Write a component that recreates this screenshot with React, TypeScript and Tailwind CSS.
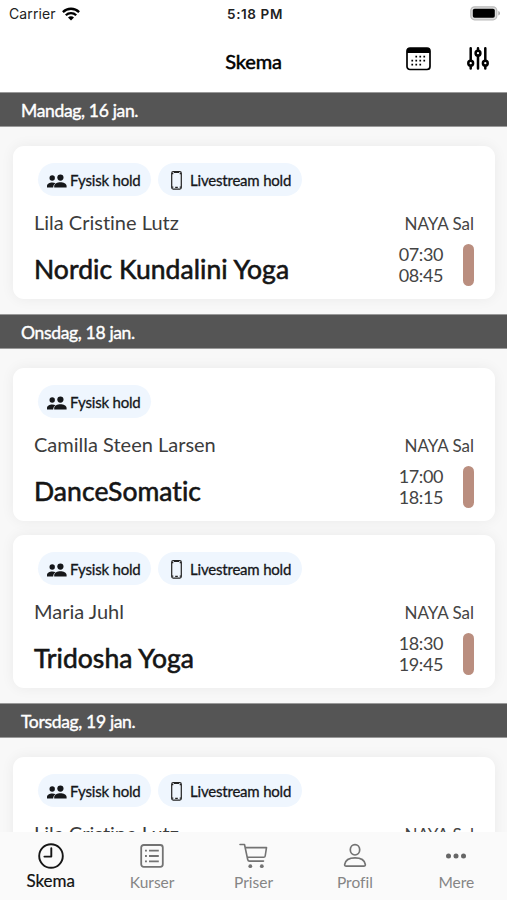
import type { ReactNode } from 'react'

interface Lesson {
  teacher: string
  title: string
  start: string
  end: string
  livestream?: boolean
}

interface Day {
  label: string
  lessons: Lesson[]
}

const days: Day[] = [
  {
    label: 'Mandag, 16 jan.',
    lessons: [
      { teacher: 'Lila Cristine Lutz', title: 'Nordic Kundalini Yoga', start: '07:30', end: '08:45', livestream: true }
    ]
  },
  {
    label: 'Onsdag, 18 jan.',
    lessons: [
      { teacher: 'Camilla Steen Larsen', title: 'DanceSomatic', start: '17:00', end: '18:15' },
      { teacher: 'Maria Juhl', title: 'Tridosha Yoga', start: '18:30', end: '19:45', livestream: true }
    ]
  },
  {
    label: 'Torsdag, 19 jan.',
    lessons: [
      { teacher: 'Lila Cristine Lutz', title: 'Nordic Kundalini Yoga', start: '07:30', end: '08:45', livestream: true }
    ]
  }
]

const WifiIcon = () => (
  <svg width="18" height="14" viewBox="0 0 18 14" fill="none" stroke="#000" strokeWidth="2.3">
    <path d="M.9 5.1a11.5 11.5 0 0 1 16.2 0" />
    <path d="M3.8 8.2a7.4 7.4 0 0 1 10.4 0" />
    <path d="M9 13.4 6 10.4a4.2 4.2 0 0 1 6 0Z" fill="#000" stroke="none" />
  </svg>
)

const BatteryIcon = () => (
  <svg width="31" height="15" viewBox="0 0 31 15">
    <rect x=".8" y=".8" width="26" height="13" rx="3.8" fill="#ddd" stroke="#bbb" strokeWidth="1.2" />
    <rect x="2.8" y="2.8" width="22" height="9" rx="1.8" fill="#000" />
    <path d="M28.3 5v4.6q1.7-.6 1.7-2.3T28.3 5Z" fill="#aaa" />
  </svg>
)

const CalendarIcon = () => (
  <svg width="25" height="24" viewBox="0 0 25 24">
    <rect x="1" y="1" width="23" height="21.5" rx="3" fill="none" stroke="#000" strokeWidth="1.7" />
    <path d="M1 6V4a3 3 0 0 1 3-3h17a3 3 0 0 1 3 3v2Z" fill="#000" />
    <path
      d="M9.4 9.7h10M5.4 13.7h14M5.4 17.7h10"
      stroke="#000"
      strokeWidth="1.7"
      strokeDasharray="1.7 2.3"
    />
  </svg>
)

const FilterIcon = () => (
  <svg width="22" height="23" viewBox="0 0 22 23" fill="none" stroke="#000" strokeWidth="2.5" strokeLinecap="round">
    <path d="M3.7 1.3v11.6M3.7 19.2v2.3M11 1.3v1.9M11 9.3v12.2M18.3 1.3v11.6M18.3 19.2v2.3" />
    <circle cx="3.7" cy="16.2" r="2.4" />
    <circle cx="11" cy="6.2" r="2.4" />
    <circle cx="18.3" cy="16.2" r="2.4" />
  </svg>
)

const PeopleIcon = () => (
  <svg width="20" height="14" viewBox="0 0 20 14" fill="#15171a">
    <circle cx="5.2" cy="4" r="2.7" />
    <circle cx="13.4" cy="3.6" r="3.1" />
    <path d="M0 13.500V12C0 9.600 2.600 8.400 5.200 8.400c1.300 0 2.500.3 3.400.8C7 10.200 6.200 11.600 6.200 13.500Z" />
    <path d="M7.200 13.500v-1.400c0-2.500 3.200-3.900 6.200-3.900s6.200 1.400 6.200 3.900v1.400Z" />
  </svg>
)

const PhoneIcon = () => (
  <svg width="11" height="19" viewBox="0 0 11 19" fill="none" stroke="#222" strokeWidth="1.2">
    <rect x=".7" y=".7" width="9.600" height="17.400" rx="1.500" />
    <path d="M3 1.400h5M1 2.600h1.300M8.700 2.600H10M1 16.200h1.300M8.700 16.200H10M4.200 16.400h2.600" />
  </svg>
)

const ClockIcon = () => (
  <svg width="26" height="26" viewBox="0 0 26 26" fill="none" stroke="#161616" strokeWidth="1.900">
    <circle cx="13" cy="13" r="11.800" />
    <path d="M13.300 5.300v8.300H6.400" strokeLinecap="round" strokeLinejoin="round" />
  </svg>
)

const ListIcon = () => (
  <svg width="24" height="24" viewBox="0 0 24 24" fill="none" stroke="#737373" strokeWidth="1.800">
    <rect x="1.200" y="1" width="21.600" height="21.800" rx="2.500" />
    <path d="M9 6.700h9.800M9 12h9.800M9 17.300h9.800" />
    <path d="M5 6.700h1.900M5 12h1.900M5 17.300h1.900" />
  </svg>
)

const CartIcon = () => (
  <svg width="29" height="26" viewBox="0 0 29 26" fill="none" stroke="#737373" strokeWidth="1.600" strokeLinejoin="round">
    <path d="M1 1.500h4.500L8.700 16.500q.3 1.600 1.800 1.600h14" strokeLinecap="round" />
    <path d="M6.200 4.600h21.300l-1.300 8.400q-.2 1.300-1.500 1.300H8.300" />
    <circle cx="11.300" cy="23.200" r="1.900" fill="#737373" stroke="none" />
    <circle cx="22.800" cy="23.200" r="1.900" fill="#737373" stroke="none" />
  </svg>
)

const ProfileIcon = () => (
  <svg width="24" height="25" viewBox="0 0 24 25" fill="none" stroke="#737373" strokeWidth="1.700">
    <ellipse cx="12" cy="6.800" rx="4.700" ry="5.200" />
    <path d="M3.300 23.200h17.400c1.200 0 1.800-.7 1.600-1.800-.7-4.400-5.200-6.600-10.300-6.600S2.400 17 1.700 21.400c-.2 1.100.4 1.800 1.600 1.800Z" />
  </svg>
)

const MoreIcon = () => (
  <svg width="22" height="6" viewBox="0 0 22 6" fill="#666">
    <circle cx="3.500" cy="3" r="2.500" />
    <circle cx="11" cy="3" r="2.500" />
    <circle cx="18.500" cy="3" r="2.500" />
  </svg>
)

const StatusBar = () => (
  <div className="grid h-7 grid-cols-[1fr_auto_1fr] items-center pr-[6px] pl-[9px] font-[Inter,sans-serif] text-[14px] text-[#222]">
    <div className="flex items-center gap-[6px] pb-px">
      <span className="tracking-[0.1px]">Carrier</span>
      <WifiIcon />
    </div>
    <span className="text-center text-[13.5px] font-semibold tracking-[0.6px]">5:18 PM</span>
    <div className="flex justify-end pb-[2px]">
      <BatteryIcon />
    </div>
  </div>
)

const LessonCard = ({ lesson }: { lesson: Lesson }) => (
  <article className="h-[153px] rounded-[11px] bg-white px-[21px] pt-[17px] shadow-[0_0_14px_rgba(0,0,0,0.06)]">
    {/* Attendance types */}
    <div className="ml-1 flex h-[33px] gap-[7px] text-[15px] tracking-[-0.2px] text-[#15171a] [-webkit-text-stroke:0.3px]">
      <span className="flex w-[113px] items-center gap-[3px] rounded-full bg-[#eff6fe] pt-[2px] pl-[9px]">
        <PeopleIcon />
        <span className="whitespace-nowrap">Fysisk hold</span>
      </span>
      {lesson.livestream && (
        <span className="flex w-[144px] items-center gap-2 rounded-full bg-[#eff6fe] pt-[2px] pl-[13px]">
          <PhoneIcon />
          <span className="whitespace-nowrap">Livestream hold</span>
        </span>
      )}
    </div>

    <div className="flex justify-between pt-[13px]">
      <div>
        <p className="h-[26px] text-[20px] leading-[26px] text-[#3c3c3c]">{lesson.teacher}</p>
        <h2 className="mt-4 text-[26.5px] leading-9 tracking-[0.05px] text-[#151515] [-webkit-text-stroke:0.6px]">
          {lesson.title}
        </h2>
      </div>
      <div className="text-[#444]">
        <p className="h-[26px] text-right text-[17px] leading-[30px]">NAYA Sal</p>
        <div className="mt-2 flex items-center justify-end gap-5">
          <p className="pt-px text-[18px] leading-[21px] tracking-[-0.4px]">
            {lesson.start}
            <br />
            {lesson.end}
          </p>
          <span className="h-[42px] w-[11px] rounded-full bg-[#ba8e7f]" />
        </div>
      </div>
    </div>
  </article>
)

interface TabProps {
  label: string
  icon: ReactNode
  active?: boolean
}

const Tab = ({ label, icon, active }: TabProps) => (
  <div className="flex flex-1 flex-col items-center pt-[10px]">
    <span className="flex h-[27px] items-center">{icon}</span>
    <span
      className={
        active
          ? 'mt-px text-[17px] leading-[22px] text-[#111] [-webkit-text-stroke:0.2px]'
          : 'mt-[2px] text-[15.5px] leading-[22px] text-[#858585]'
      }
    >
      {label}
    </span>
  </div>
)

export default function App() {
  return (
    <div className="flex h-[900px] w-[507px] flex-col overflow-hidden bg-[#f8f8f8] font-[Lato,sans-serif] [font-variant-ligatures:none]">
      <header className="h-[92px] shrink-0 bg-white">
        <StatusBar />
        <div className="grid h-[64px] grid-cols-[1fr_auto_1fr] items-center pr-[18px] pl-[18px]">
          <h1 className="col-start-2 pt-px text-center text-[20px] tracking-[-0.1px] text-black [-webkit-text-stroke:0.5px]">
            Skema
          </h1>
          <div className="flex items-center justify-end gap-[36px] pb-[3px]">
            <CalendarIcon />
            <FilterIcon />
          </div>
        </div>
      </header>

      <main className="min-h-0 flex-1 overflow-hidden">
        {days.map((day) => (
          <section key={day.label}>
            <h3 className="h-[35px] border-y border-[#999] bg-[#555] pl-[21px] text-[17.5px] leading-[35px] tracking-[-0.33px] text-white [-webkit-text-stroke:0.4px]">
              {day.label}
            </h3>
            <div className="flex flex-col gap-[14px] pt-[19px] pr-3 pb-[15px] pl-[13px]">
              {day.lessons.map((lesson) => (
                <LessonCard key={lesson.title} lesson={lesson} />
              ))}
            </div>
          </section>
        ))}
      </main>

      {/* Bottom navigation */}
      <nav className="relative flex h-[68px] shrink-0 bg-[#fafafa]">
        <Tab label="Skema" icon={<ClockIcon />} active />
        <Tab label="Kurser" icon={<ListIcon />} />
        <Tab label="Priser" icon={<CartIcon />} />
        <Tab label="Profil" icon={<ProfileIcon />} />
        <Tab label="Mere" icon={<MoreIcon />} />
      </nav>
    </div>
  )
}
